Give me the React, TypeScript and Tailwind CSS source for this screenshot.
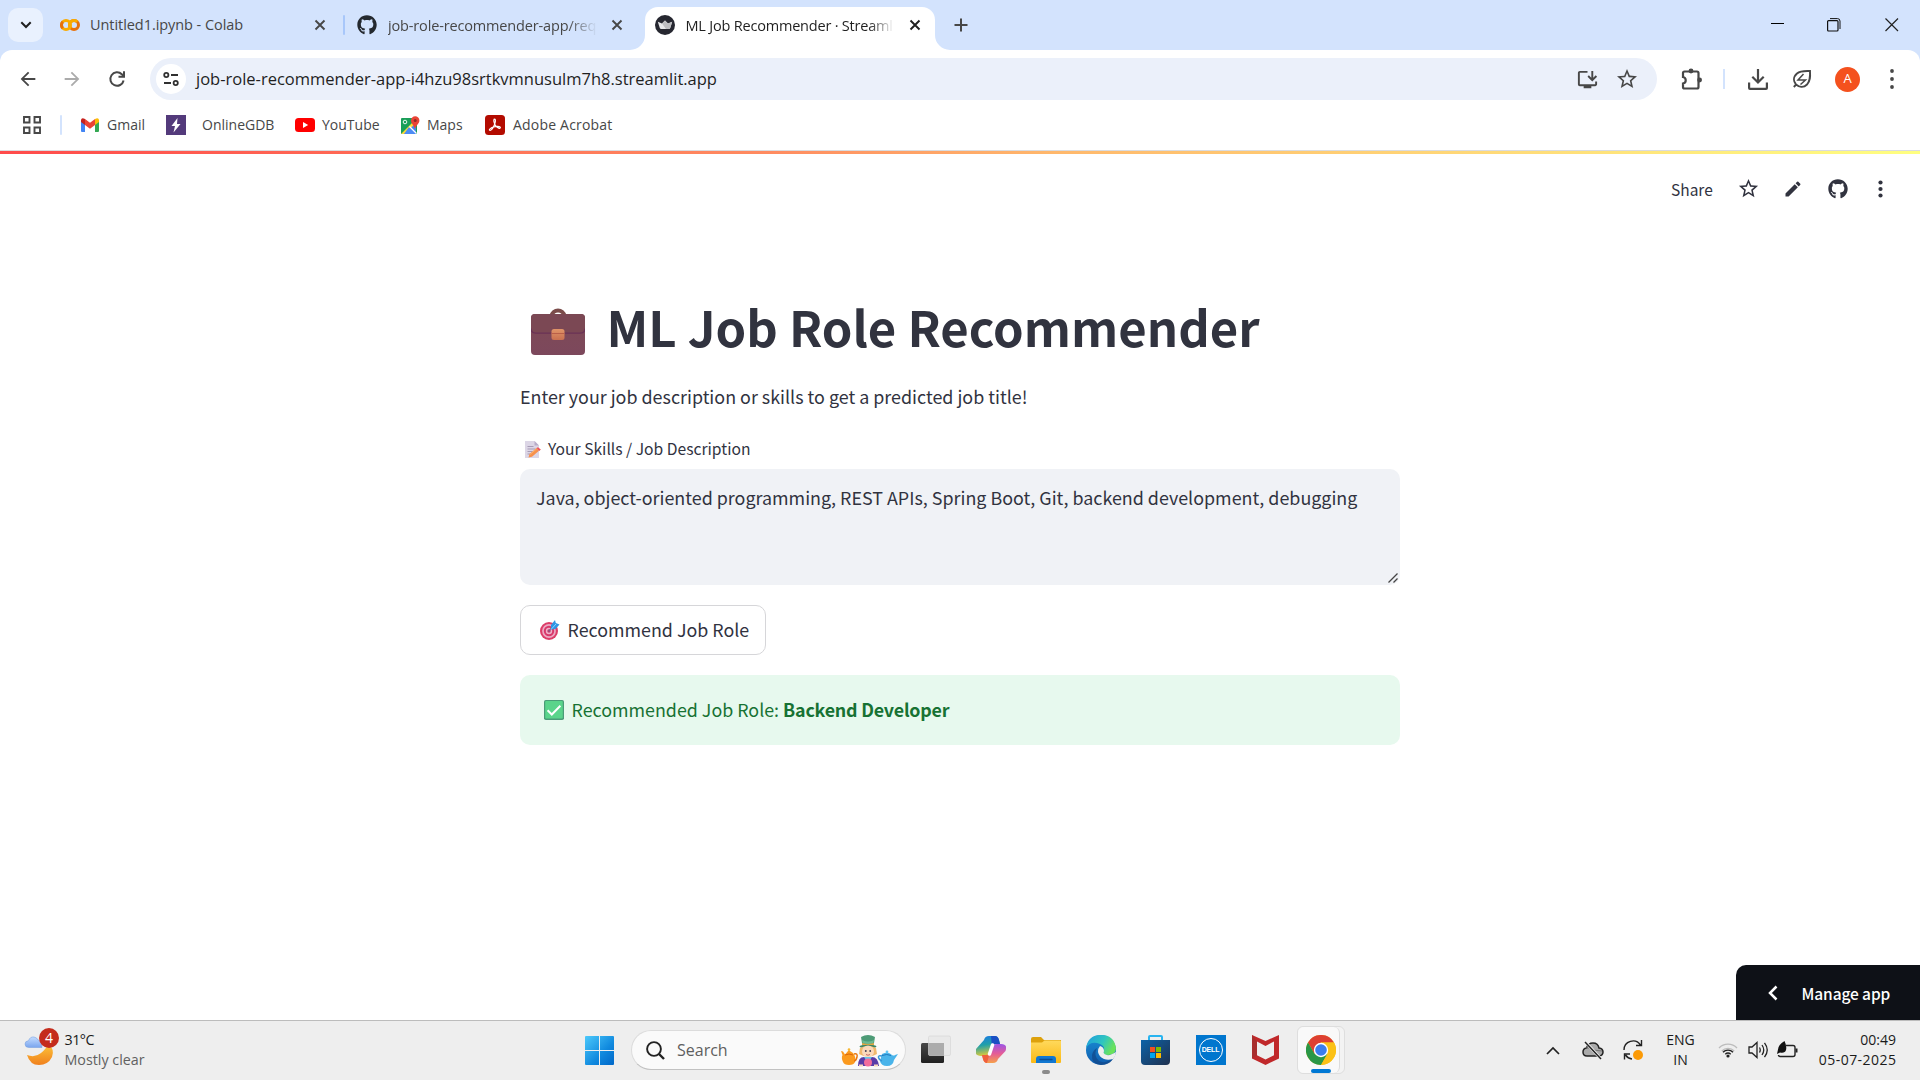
import React from "react";
import { MdArrowBack, MdArrowForward, MdStarBorder, MdEdit, MdInstallDesktop } from "react-icons/md";
import { FaGithub } from "react-icons/fa";

const ui = "whitespace-nowrap [font-family:'Open_Sans','Noto_Sans',sans-serif]";
const src = "whitespace-nowrap [font-family:'Noto_Sans_CJK_SC','Noto_Sans',sans-serif]";

function TabClose({ color }: { color: string }) {
  return (
    <svg width="12" height="12" viewBox="0 0 12 12" className="shrink-0">
      <path d="M1.5 1.5 10.5 10.5M10.5 1.5 1.5 10.5" stroke={color} strokeWidth="1.9" />
    </svg>
  );
}

function ColabIcon() {
  return (
    <svg width="20" height="12" viewBox="0 0 20 12" className="shrink-0" fill="none" strokeWidth="3">
      <circle cx="14" cy="6" r="4.5" stroke="#e8710a" />
      <path d="M10.800 9.200A4.500 4.500 0 0 1 17.200 2.800" stroke="#f9ab00" />
      <circle cx="6" cy="6" r="4.5" stroke="#f9ab00" />
      <path d="M2.800 2.800A4.500 4.500 0 0 0 2.800 9.200" stroke="#e8710a" />
    </svg>
  );
}

function CrownIcon() {
  return (
    <svg width="20" height="20" viewBox="0 0 20 20" className="shrink-0">
      <circle cx="10" cy="10" r="10" fill="#262730" />
      <path d="M2.8 6.8 7 8.6 10 5.6l3 3 4.2-1.8-2 6.2q-.3 1-1.4 1H6.2q-1.100 0-1.400-1Z" fill="#e8e8ea" />
      <path d="m10 5.600 3 3 4.200-1.800-2 6.200q-.3 1-1.400 1H11l-4-5.400Z" fill="#bdbdc0" />
    </svg>
  );
}

function TabStrip() {
  return (
    <div className="flex h-[50px] w-full shrink-0 items-center bg-[#d3e3fd]">
      <div className="ml-2 flex h-[34px] w-[35px] items-center justify-center rounded-[10px] bg-[#e9f1fe]">
        <svg width="12" height="8" viewBox="0 0 12 8"><path d="M1.300 1.300 6 6l4.700-4.700" fill="none" stroke="#1f1f1f" strokeWidth="2" /></svg>
      </div>
      <div className="ml-[17px] flex w-[283px] items-center">
        <ColabIcon />
        <span className={`${ui} ml-[10px] flex-1 text-[14.5px] tracking-[-0.06px] text-[#474747]`}>Untitled1.ipynb - Colab</span>
        <div className="mr-[17px] flex"><TabClose color="#474747" /></div>
      </div>
      <div className="h-5 w-[2px] rounded bg-[#a8c7fa]" />
      <div className="ml-[12px] flex w-[288px] items-center">
        <FaGithub size={20} color="#24292f" className="shrink-0" />
        <div className="ml-[11px] w-[209px] [mask-image:linear-gradient(90deg,#000_86%,transparent)]">
          <span className={`${ui} text-[14.5px] tracking-[-0.15px] text-[#474747]`}>job-role-recommender-app/req</span>
        </div>
        <div className="ml-[14px] flex"><TabClose color="#474747" /></div>
      </div>
      <div className="relative mt-[7px] flex h-[43px] w-[290px] items-center rounded-t-[13px] bg-white">
        <svg width="15" height="15" viewBox="0 0 15 15" className="absolute bottom-0 -left-[15px]"><path d="M15 0v15H0A15 15 0 0 0 15 0Z" fill="#fff" /></svg>
        <svg width="15" height="15" viewBox="0 0 15 15" className="absolute -right-[15px] bottom-0"><path d="M0 0v15h15A15 15 0 0 1 0 0Z" fill="#fff" /></svg>
        <div className="-mt-[7px] ml-[10px] flex items-center">
          <CrownIcon />
          <div className="ml-[10.5px] w-[208px] [mask-image:linear-gradient(90deg,#000_88%,transparent)]">
            <span className={`${ui} text-[14.5px] tracking-[-0.2px] text-[#1f1f1f]`}>ML Job Recommender · Streaml</span>
          </div>
          <div className="ml-[15.5px] flex"><TabClose color="#1f1f1f" /></div>
        </div>
      </div>
      <svg width="14" height="14" viewBox="0 0 14 14" className="ml-[19px]"><path d="M7 .5v13M.5 7h13" stroke="#474747" strokeWidth="2" /></svg>
      <div className="ml-auto flex items-center pr-[21px]">
        <svg width="14" height="14" viewBox="0 0 14 14" shapeRendering="crispEdges"><path d="M0 5.500h13" stroke="#000" /></svg>
        <svg width="14" height="14" viewBox="0 0 14 14" className="ml-[42px]" fill="none" stroke="#111">
          <rect x=".6" y="2.600" width="10.400" height="10.400" rx="1" strokeWidth="1.200" />
          <path d="M3 .6h7.500a2.500 2.500 0 0 1 2.500 2.500V11" />
        </svg>
        <svg width="14" height="14" viewBox="0 0 14 14" className="ml-[44px]"><path d="m.5.5 12.500 12.500M13 .5.5 13" stroke="#222" strokeWidth="1.200" /></svg>
      </div>
    </div>
  );
}

function TuneIcon() {
  return (
    <svg width="16" height="16" viewBox="0 0 16 16" fill="none" stroke="#303030" strokeWidth="1.800">
      <circle cx="3.300" cy="4" r="2.100" /><path d="M8 4h7M1 12h7" /><circle cx="12.700" cy="12" r="2.100" />
    </svg>
  );
}

function Toolbar() {
  return (
    <div className="shrink-0 bg-[#d3e3fd]">
      <div className="flex h-[58px] items-center rounded-t-[12px] bg-white">
        <MdArrowBack size={22} color="#474747" className="ml-[17px]" />
        <MdArrowForward size={22} color="#ababab" className="ml-[22px]" />
        <svg width="18" height="18" viewBox="0 0 18 18" className="ml-[25px]" fill="none" stroke="#474747" strokeWidth="2">
          <path d="M15.600 10.500A6.700 6.700 0 1 1 13.800 4.300L16 6.500" /><path d="M16 1.200v5.500h-5.500" />
        </svg>
        <div className="ml-[24px] flex h-[42px] w-[1507px] items-center rounded-full bg-[#ebf0fa]">
          <div className="ml-[6px] flex h-[30px] w-[30px] items-center justify-center rounded-full bg-white"><TuneIcon /></div>
          <span className={`${ui} ml-[10px] text-[16.5px] text-[#1f1f1f]`}>job-role-recommender-app-i4hzu98srtkvmnusulm7h8.streamlit.app</span>
          <MdInstallDesktop size={23} color="#474747" className="ml-auto" />
          <MdStarBorder size={24} color="#474747" className="mr-[18px] ml-[16px]" />
        </div>
        <svg width="22" height="22" viewBox="0 0 22 22" className="ml-[24px]">
          <path d="M2 5q0-1.500 1.500-1.500H16q1.500 0 1.500 1.500V19q0 1.500-1.500 1.500H3.500Q2 20.500 2 19v-3.500a3.300 3.300 0 0 0 0-6.500Z" fill="none" stroke="#474747" strokeWidth="2.200" />
          <circle cx="10" cy="3" r="2.400" fill="#474747" /><circle cx="18.600" cy="12" r="2.400" fill="#474747" />
        </svg>
        <div className="ml-[20px] h-5 w-[2px] bg-[#d3e3fd]" />
        <svg width="22" height="22" viewBox="0 0 22 22" className="ml-[22px]" fill="none" stroke="#474747" strokeWidth="2.200">
          <path d="M11 1v13M5.300 8.800 11 14.500l5.700-5.700M2.100 14.500V20q0 .9.900.9h16q.9 0 .9-.9v-5.500" />
        </svg>
        <svg width="20" height="20" viewBox="0 0 20 20" className="ml-[23px]" fill="none" stroke="#474747">
          <path d="M18 2Q8.500 1.500 5 4.500C.5 8.500 1.800 13 4 15.500 7 18 11.500 19 15 15.500 18.300 12 18.300 8 18 2ZM4.200 15.500 1.800 18" strokeWidth="1.900" />
          <path d="M11.500 5 6 11h7.500L8.500 15.500" strokeWidth="1.500" />
        </svg>
        <div className={`${ui} ml-[23px] flex h-[25px] w-[25px] items-center justify-center rounded-full bg-[#f4511e] text-[13px] text-white`}>A</div>
        <svg width="6" height="20" viewBox="0 0 6 20" className="ml-[29px]" fill="#474747"><circle cx="3" cy="2" r="1.900" /><circle cx="3" cy="10" r="1.900" /><circle cx="3" cy="18" r="1.900" /></svg>
      </div>
    </div>
  );
}

function Bookmark({ icon, label, gap, tight }: { icon: React.ReactNode; label: string; gap: string; tight: string }) {
  return (
    <div className={`flex items-center ${gap}`}>
      {icon}
      <span className={`${ui} mb-[2px] text-[14px] text-[#474747] ${tight}`}>{label}</span>
    </div>
  );
}

function Bookmarks() {
  return (
    <div className="flex h-[43px] shrink-0 items-start border-b border-[#dadce0] bg-white pt-[7px]">
      <div className="flex h-5 items-center">
        <svg width="18" height="18" viewBox="0 0 18 18" className="ml-[23px]" fill="none" stroke="#474747" strokeWidth="1.900">
          <path d="M1 1h5.500v5.500H1ZM11.500 1H17v5.500h-5.500ZM1 11.500h5.500V17H1ZM11.500 11.500H17V17h-5.500Z" />
        </svg>
        <div className="ml-[19px] h-5 w-[2px] rounded bg-[#d3e3fd]" />
        <Bookmark gap="ml-[19px] w-[85px]" tight="ml-[8px]" label="Gmail" icon={
          <svg width="18" height="14" viewBox="0 0 18 14" className="shrink-0">
            <path d="M0 2v11q0 1 1 1h3V5Z" fill="#4285f4" /><path d="M18 2v11q0 1-1 1h-3V5Z" fill="#34a853" />
            <path d="M4 1v6l5 3.800L14 7V1L9 4.800Z" fill="#ea4335" /><path d="M0 2Q.5-1 4 1v6L0 4Z" fill="#c5221f" /><path d="M18 2q-.5-3-4-1v6l4-3Z" fill="#fbbc04" />
          </svg>} />
        <Bookmark gap="w-[129px]" tight="ml-[16px]" label="OnlineGDB" icon={
          <svg width="20" height="20" viewBox="0 0 20 20" className="shrink-0"><rect width="20" height="20" fill="#533a7b" /><path d="M11.500 3 5.500 11H9l-1.500 6.500L14.500 9H11Z" fill="#fff" /></svg>} />
        <Bookmark gap="w-[106px]" tight="ml-[7px]" label="YouTube" icon={
          <svg width="20" height="14" viewBox="0 0 20 14" className="shrink-0"><rect width="20" height="14" rx="3.500" fill="#f00" /><path d="m8 4 5.200 3L8 10Z" fill="#fff" /></svg>} />
        <Bookmark gap="w-[84px]" tight="ml-[7px]" label="Maps" icon={
          <svg width="19" height="19" viewBox="0 0 19 19" className="shrink-0">
            <rect y="2" width="16" height="16" rx="1" fill="#1a9e58" /><path d="M1 18 15 4v14Z" fill="#4285f4" /><path d="m.5 17.500 15-15V6.500L3.500 18H1Z" fill="#fdd835" /><path d="m8 11 7.500 7H3Z" fill="#4c8bf5" /><path d="m8.500 10.500 7 7" stroke="#fff" strokeWidth="1.300" />
            <path d="M14 13.500C13.500 9.500 10 8 10 4.500a4.200 4.200 0 0 1 8.400 0C18.400 8 14.500 9.500 14 13.500Z" fill="#ea4335" /><circle cx="14.200" cy="4.500" r="1.500" fill="#8e2c26" /><circle cx="4" cy="6" r="1.800" fill="none" stroke="#fff" strokeWidth=".9" />
          </svg>} />
        <Bookmark gap="" tight="ml-[8px] tracking-[0.2px]" label="Adobe Acrobat" icon={
          <svg width="20" height="20" viewBox="0 0 20 20" className="shrink-0"><rect width="20" height="20" rx="3.500" fill="#b30b00" />
            <path d="M9.500 4.200c1.600 0 .8 3.500-.2 5.800-1 2.400-3 5.600-4.500 5.300-1.500-.6 1.300-2.700 4-3.400 2.300-.6 6.500-.9 6.600.7 0 1.500-3 .3-4.500-1.500C9.200 9.200 8 4.200 9.500 4.200Z" fill="none" stroke="#fff" strokeWidth="1.200" /></svg>} />
      </div>
    </div>
  );
}

function AppMenu() {
  return (
    <div className="flex h-[69px] items-center pl-[1671px]">
      <span className={`${src} w-[68px] text-[15.500px] leading-[20px] text-[#31333f]`}>Share</span>
      <MdStarBorder size={23} color="#31333f" className="-ml-[2px] shrink-0" />
      <MdEdit size={20} color="#31333f" className="ml-[23px] shrink-0" />
      <FaGithub size={20} color="#31333f" className="ml-[25px] shrink-0" />
      <svg width="5" height="18" viewBox="0 0 5 18" className="ml-[30px] shrink-0" fill="#31333f"><circle cx="2.500" cy="2.500" r="2.100" /><circle cx="2.500" cy="9" r="2.100" /><circle cx="2.500" cy="15.500" r="2.100" /></svg>
    </div>
  );
}

function Briefcase() {
  return (
    <svg width="54" height="49" viewBox="0 0 54 49" className="shrink-0">
      <defs><linearGradient id="bc" x2="0" y2="1"><stop stopColor="#7f4a56" /><stop offset="1" stopColor="#7c485c" /></linearGradient>
        <linearGradient id="bl" x2="0" y2="1"><stop stopColor="#e09468" /><stop offset="1" stopColor="#c97050" /></linearGradient></defs>
      <path d="M20.500 10a6.600 6.600 0 0 1 13 0" fill="none" stroke="#7b4c4a" strokeWidth="4" />
      <rect y="8" width="54" height="41" rx="4" fill="url(#bc)" />
      <path d="M0 23q0 4.500 5 4.500h44q5 0 5-4.500V12q0-4-4-4H4q-4 0-4 4Z" fill="#7b4854" />
      <path d="M0 22.500q0 4.700 5 4.700h44q5 0 5-4.700" fill="none" stroke="#6b3257" strokeWidth="1.300" />
      <rect x="20.500" y="23" width="13" height="11" rx="2.500" fill="url(#bl)" /><path d="M20.500 27.500h13" stroke="#b95f48" />
    </svg>
  );
}

function Memo() {
  return (
    <svg width="17" height="17" viewBox="0 0 17 17" className="shrink-0">
      <path d="M0 0h9.500L14 4.500V17H0Z" fill="#dcd6e6" /><path d="M9.500 0 14 4.500H9.500Z" fill="#b7acc8" />
      <path d="M2.500 5.500h6M2.500 8h8M2.500 10.500h5M2.500 13h3" stroke="#a79bb5" />
      <path d="m3.500 16.500 1-3.500 7-6 2.500 2.700-7 6Z" fill="#f7914d" /><path d="m11.500 7 1.500-.8 2.800 2.300-1.500 1.500Z" fill="#ef4f5b" /><path d="m5 13.500 6.500-5.500" stroke="#ffb066" />
    </svg>
  );
}

function Dart() {
  return (
    <svg width="20" height="20" viewBox="0 0 20 20" className="shrink-0">
      <circle cx="9" cy="11" r="9" fill="#dc3d68" /><circle cx="9" cy="11" r="6.900" fill="#eba9c3" /><circle cx="9" cy="11" r="5.200" fill="#d8386a" /><circle cx="9" cy="11" r="3.200" fill="#efb0c8" /><circle cx="9" cy="11" r="1.700" fill="#c93468" />
      <path d="m8.500 11.500 4.500-5" stroke="#7f5f86" strokeWidth="1.300" />
      <path d="M11 9.500V5l4-5 .8 3L19.500 4.500 15.500 9Z" fill="#2f95e4" /><path d="m11 9.500 5-5.500" stroke="#8ad0ff" />
    </svg>
  );
}

function Check() {
  return (
    <svg width="20" height="20" viewBox="0 0 20 20" className="shrink-0">
      <rect width="20" height="20" rx="1.800" fill="#4a9c78" /><rect x="1.200" y="1" width="17.600" height="17.500" rx="1" fill="#5ad48b" />
      <path d="m3.600 10.300 4.200 4.200 8.600-8.800" fill="none" stroke="#fff" strokeWidth="2" />
    </svg>
  );
}

function StreamlitApp() {
  return (
    <div className="flex h-[869px] shrink-0 flex-col bg-white">
      <div className="h-[3px] shrink-0 bg-[linear-gradient(90deg,#ff4b4b,#ff8b60_40%,#ffb86c_55%,#ffe07a_82%,#ffff80)]" />
      <AppMenu />
      <div className="mx-auto flex w-[880px] flex-col text-[#31333f]">
        <div className="mt-[74px] flex h-[66px] items-center pl-[11px]">
          <Briefcase />
          <h1 className={`${src} mb-[8px] ml-[21.500px] text-[49px] leading-[66px] font-bold`}>ML Job Role Recommender</h1>
        </div>
        <p className={`${src} mt-[18px] w-fit text-[17.900px] leading-[30px]`}>Enter your job description or skills to get a predicted job title!</p>
        <div className="mt-[26px] flex h-[24px] items-center pl-[5px]">
          <Memo />
          <span className={`${src} ml-[6px] text-[15.650px] leading-[24px]`}>Your Skills / Job Description</span>
        </div>
        <div className="relative mt-[8px] h-[116px] rounded-[10px] bg-[#f0f2f6] px-4 pt-[13px]">
          <span className={`${src} text-[17.900px] leading-[30px]`}>Java, object-oriented programming, REST APIs, Spring Boot, Git, backend development, debugging</span>
          <svg width="10" height="10" viewBox="0 0 10 10" className="absolute right-[2px] bottom-[2px]"><path d="M.5 9.500 9.500.5M5.500 9.500l4-4" stroke="#444" strokeWidth="1.300" /></svg>
        </div>
        <button className="mt-[20px] flex h-[50px] w-[246px] items-center rounded-[10px] border border-[#d6d6d9] pl-[19px]">
          <Dart />
          <span className={`${src} mb-[3px] ml-[7.500px] text-[17.850px] leading-[30px]`}>Recommend Job Role</span>
        </button>
        <div className="mt-[20px] flex h-[70px] items-center rounded-[10px] bg-[#e7f9ee] pl-[24px] text-[#177233]">
          <Check />
          <span className={`${src} mb-[3px] ml-[7.500px] text-[17.850px] leading-[30px]`}>Recommended Job Role:</span>
          <span className={`${src} mb-[3px] ml-[4px] text-[17.850px] leading-[30px] font-semibold tracking-[-0.200px]`}>Backend Developer</span>
        </div>
      </div>
      <div className="mt-auto ml-auto flex h-[55px] w-[184px] items-center rounded-tl-[10px] bg-[#0e1117] text-white">
        <svg width="10" height="16" viewBox="0 0 10 16" className="ml-[32px]"><path d="M8.500 1.500 2 8l6.500 6.500" fill="none" stroke="#fff" strokeWidth="2.500" /></svg>
        <span className={`${src} ml-[23.500px] text-[15.500px] leading-[24px] font-medium tracking-[-0.100px]`}>Manage app</span>
      </div>
    </div>
  );
}

function Cell({ children, mark }: { children: React.ReactNode; mark?: string }) {
  return (
    <div className="relative flex h-[48px] w-[55px] shrink-0 items-center justify-center">
      {children}
      {mark && <div className={`absolute bottom-0 h-1 rounded-full ${mark}`} />}
    </div>
  );
}

function Hatter() {
  return (
    <svg width="58" height="33" viewBox="0 0 58 33" className="shrink-0">
      <path d="M7 17q1-2 2 0l3 2q3 3 2 9-1 3-6 3t-6-3q-2-4-.5-7L0 17l2 .5 2 3Z" fill="#fb9a1e" /><path d="M13 20q4-1 3 3t-3 4" fill="none" stroke="#e9760f" strokeWidth="1.500" />
      <circle cx="8" cy="15.500" r="1.300" fill="#f7b733" /><path d="M4 21q4-2 8 0" stroke="#d9640b" fill="none" />
      <path d="M20 3q7-4 14 0l-1.500 9h-11Z" fill="#4d9b76" /><path d="M21 6q6 3 12 0l-.7 3q-5 2-10.600 0Z" fill="#6eb992" /><path d="M21 9q6 2 12 0l-.3 2.500H21.300Z" fill="#eba73d" /><ellipse cx="27" cy="12.500" rx="8.500" ry="1.800" fill="#3d8566" />
      <path d="M19 14q8-4 16 0l1 6q-9 5-18 0Z" fill="#f1b96d" /><circle cx="27" cy="17.500" r="6" fill="#fbd9bb" /><circle cx="24.800" cy="17" r=".9" fill="#3c3a50" /><circle cx="29.200" cy="17" r=".9" fill="#3c3a50" /><path d="M25 20.500q2 1.500 4 0" stroke="#c66" fill="none" />
      <path d="M17 32q0-9 6-9h8q6 0 7 9Z" fill="#5a3ca8" /><path d="M23 23h8l-4 6Z" fill="#66c6ea" /><circle cx="27" cy="28.500" r="4" fill="#f26d9c" /><path d="M18 31.500h4M33 31.500h4" stroke="#fbd9bb" strokeWidth="2" />
      <path d="M41 20q6-3 10 1 2 1 3 0l3-1-4 6q-1 6-7 6-6 0-7-5Z" fill="#4ab4ea" /><circle cx="46" cy="18" r="1.400" fill="#62c4f2" /><path d="M41 22q-4-1-3.500 1.500T41 27" fill="none" stroke="#3797d8" strokeWidth="1.500" /><path d="M41 21.500q5-2 9 0" stroke="#1f78bd" fill="none" />
    </svg>
  );
}

function Taskbar() {
  return (
    <div className="flex h-[60px] shrink-0 items-center border-t border-[#bcbcbc] bg-[#eeeeee] pb-[1px]">
      <div className="flex w-[585px] items-center">
        <svg width="36" height="34" viewBox="0 0 36 34" className="-mt-[4px] ml-[24px] shrink-0">
          <defs><linearGradient id="mn" x2="0" y2="1"><stop stopColor="#fdc53a" /><stop offset="1" stopColor="#f0801d" /></linearGradient><linearGradient id="cl" x2="0" y2="1"><stop stopColor="#c3dcff" /><stop offset="1" stopColor="#7aa5ee" /></linearGradient></defs>
          <path d="M3 24q8 3 14-2t7-9q7 5 4 13-4 8-13 8Q6 34 3 24Z" fill="url(#mn)" />
          <path d="M5 16.500q-4 0-4-3.500 0-3 3.500-3.300Q6 5.500 10 6q3 .5 4 3 4 0 4 7.500Z" fill="url(#cl)" stroke="#7ba2e0" strokeWidth=".6" />
        </svg>
        <div className={`${ui} z-10 -mt-[25px] -ml-[21px] flex h-5 w-5 shrink-0 items-center justify-center rounded-full bg-[#c42b1c] text-[14px] text-white`}>4</div>
        <div className={`${ui} mb-[1px] ml-[5.500px] flex flex-col text-[14.300px] leading-[20px]`}>
          <span className="w-fit tracking-[-0.500px] text-[#1b1b1b]">31°C</span>
          <span className="w-fit text-[#616161]">Mostly clear</span>
        </div>
      </div>
      <svg width="29" height="29" viewBox="0 0 29 29" className="shrink-0">
        <defs><linearGradient id="win" x2="1" y2="1"><stop stopColor="#4cc9fb" /><stop offset=".6" stopColor="#1089de" /><stop offset="1" stopColor="#0067c8" /></linearGradient></defs>
        <path d="M1 0h13v14H0V1Q0 0 1 0ZM15 0h13q1 0 1 1v13H15ZM0 15h14v14H1q-1 0-1-1ZM15 15h14v13q0 1-1 1H15Z" fill="url(#win)" />
      </svg>
      <div className="ml-[17px] flex h-[40px] w-[275px] shrink-0 items-center rounded-full border border-[#dcdcdc] border-b-[#c2c2c2] bg-[#fafafa]">
        <svg width="19" height="19" viewBox="0 0 19 19" className="ml-[14px]"><circle cx="8" cy="8" r="6.900" fill="none" stroke="#222" strokeWidth="1.900" /><path d="m13 13 5 5" stroke="#222" strokeWidth="2.400" /></svg>
        <span className={`${ui} ml-[12px] text-[16px] text-[#5f5f5f]`}>Search</span>
        <div className="mr-[6px] ml-auto"><Hatter /></div>
      </div>
      <div className="ml-[2px] flex">
        <Cell><svg width="30" height="30" viewBox="0 0 30 30"><defs><linearGradient id="tv" x2="0" y2="1"><stop stopColor="#484848" /><stop offset="1" stopColor="#202020" /></linearGradient></defs>
          <rect y="8" width="23" height="20" rx="1.500" fill="url(#tv)" /><rect x="7.500" y="1" width="22" height="19.500" rx="1.500" fill="#e9e9e9" stroke="#d4d4d4" strokeWidth=".6" /><path d="M7.500 8H23v12.500H9q-1.500 0-1.500-1.500Z" fill="#acacac" /></svg></Cell>
        <Cell><svg width="30" height="28" viewBox="0 0 30 28"><defs>
          <linearGradient id="c1" x2="0.200" y2="1"><stop stopColor="#1b78e8" /><stop offset=".5" stopColor="#20a0a8" /><stop offset="1" stopColor="#d9c93c" /></linearGradient>
          <linearGradient id="c2" x2="0" y2="1"><stop stopColor="#9b55e6" /><stop offset=".5" stopColor="#e45c98" /><stop offset="1" stopColor="#f6a04a" /></linearGradient></defs>
          <path d="M8 4q1-4 5-4h6q3 0 4 4l1 4h-4q-3 0-4 3l-2 6q-1 3-5 3H5q-7 0-5-7Z" fill="url(#c1)" /><path d="M15 0h4q3 0 4 4l1 4h-4q-3 0-4 3Z" fill="#1a4fc4" />
          <path d="M22 23q-1 4-5 4h-6q-3 0-4-4l-1-4h4q3 0 4-3l2-5q1-3 5-3h4q7 0 4.500 7Z" fill="url(#c2)" /><path d="M6 19h4q3 0 4-3l-3 11q-3 0-4-4Z" fill="#f0603c" />
          <path d="m16.500 9-3 9" stroke="#fff" strokeWidth="3.500" strokeLinecap="round" /></svg></Cell>
        <Cell mark="w-2 bg-[#8a8a8a]"><svg width="30" height="27" viewBox="0 0 30 27"><defs><linearGradient id="fd" x2="0" y2="1"><stop stopColor="#ffd95c" /><stop offset="1" stopColor="#fbb914" /></linearGradient></defs>
          <path d="M0 2q0-2 2-2h8l3 3h17v5H0Z" fill="#dda10c" /><path d="M0 5.500h11L13.500 3.500H29q1 0 1 1V25q0 1-1 1H1q-1 0-1-1Z" fill="url(#fd)" /><path d="M5 26v-4q0-3 3-3h14q3 0 3 3v4Z" fill="#1177d1" /><path d="M9 22.500h12" stroke="#0c4e94" strokeWidth="1.300" strokeLinecap="round" /></svg></Cell>
        <Cell><svg width="30" height="30" viewBox="0 0 30 30"><defs><linearGradient id="e1" x2="1" y2=".4"><stop stopColor="#1e9be0" /><stop offset=".6" stopColor="#2fc5c0" /><stop offset="1" stopColor="#6ae25c" /></linearGradient><linearGradient id="e2" x2="0" y2="1"><stop stopColor="#1a8fd6" /><stop offset="1" stopColor="#0f5cae" /></linearGradient></defs>
          <circle cx="15" cy="15" r="15" fill="url(#e2)" /><path d="M0 13Q2 0 15 0t15 13q0 7-8 7-6 0-4-4 1-5-4-7Q5 5 0 13Z" fill="url(#e1)" />
          <path d="M11 13q-4 8 2 13 5 3 14-2-4 6-12 6Q5 29 6 20q1-5 5-7Z" fill="#114a8b" opacity=".75" /><path d="M14 11q4 1 4 5-1 2 .5 3 4 3 11.500-2 0 4-3 7-5 1.500-9 0-5-2-6-7 0-4 2-6Z" fill="#eeeeee" /></svg></Cell>
        <Cell><svg width="29" height="30" viewBox="0 0 29 30"><defs><linearGradient id="st" x2="1" y2="1"><stop stopColor="#0c63a8" /><stop offset="1" stopColor="#20314f" /></linearGradient></defs>
          <path d="M8 6V2q0-1 1-1h11q1 0 1 1v4" fill="none" stroke="#28b4f0" strokeWidth="2" /><path d="M0 5h29v21q0 4-4 4H4q-4 0-4-4Z" fill="url(#st)" />
          <path d="M9 12h5v5H9Z" fill="#f25022" /><path d="M15 12h5v5h-5Z" fill="#7fba00" /><path d="M9 18h5v5H9Z" fill="#00a4ef" /><path d="M15 18h5v5h-5Z" fill="#ffb900" /></svg></Cell>
        <Cell><div className="flex h-[30px] w-[30px] items-center justify-center bg-[#0076ce]">
          <div className="flex h-6 w-6 items-center justify-center rounded-full border-[1.500px] border-white"><span className="text-[7px] font-bold tracking-[-0.200px] text-white [font-family:'Liberation_Sans',sans-serif]">DELL</span></div></div></Cell>
        <Cell><svg width="27" height="30" viewBox="0 0 27 30"><path d="M0 0 13.500 6 27 0v23.500L13.500 30 0 23.500Z" fill="#c0282a" /><path d="M5 6.500 13.500 11 22 6.500v13.700l-8.500 4.300L5 20.200Z" fill="#eeeeee" /><path d="M0 0 5 6.500v13.700l-5 3.300Z" fill="#a82d2d" /></svg></Cell>
        <div className="ml-[4px] flex h-[48px] w-[48px] shrink-0 rounded-md border border-[#dedede] bg-[#f3f3f3]">
          <div className="relative flex h-[46px] w-[42px] items-center justify-center rounded-md border-r border-[#dcdcdc] bg-[#f9f9f9] pl-[4px]">
            <svg width="30" height="30" viewBox="0 0 30 30"><circle cx="15" cy="15" r="15" fill="#fbc116" /><path d="M15 7.500h13a15 15 0 0 0-26 0L8.500 18.700Z" fill="#dd3f32" /><path d="M2 7.500a15 15 0 0 0 13 22.500l6.500-11.300H8.500Z" fill="#2a9747" /><path d="M21.500 18.700 15 30A15 15 0 0 0 28 7.500H15Z" fill="#fbc116" /><circle cx="15" cy="15" r="7.200" fill="#fff" /><circle cx="15" cy="15" r="5.800" fill="#3b7ded" /></svg>
            <div className="absolute bottom-0 left-[13px] h-1 w-5 rounded-full bg-[#0078d4]" />
          </div>
        </div>
      </div>
      <div className="mr-[24px] ml-auto flex items-center text-[#1b1b1b]">
        <svg width="14" height="9" viewBox="0 0 14 9"><path d="m1 8 6-6 6 6" fill="none" stroke="#222" strokeWidth="1.700" /></svg>
        <svg width="22" height="20" viewBox="0 0 22 20" className="ml-[22px]"><path d="M5 16q-4 0-4-4 0-3.500 3.500-4Q6 3 11 3t6 5q4 .5 4 4t-4 4Z" fill="#aaa" stroke="#222" strokeWidth="1.500" /><path d="M4 8q4-1 7 2l9 1" stroke="#777" fill="none" /><path d="m3.500 2 15.500 17" stroke="#eee" strokeWidth="3" /><path d="m3 2 16 17" stroke="#222" strokeWidth="1.500" /></svg>
        <svg width="22" height="22" viewBox="0 0 22 22" className="ml-[18px]" fill="none" stroke="#222" strokeWidth="1.400"><path d="M2 11a9 9 0 0 1 16.500-5M19.500 1v5.500H14M10 20a9 9 0 0 1-6.500-4M2.500 20.500V15H8" /><circle cx="16" cy="16" r="5" fill="#fb9a06" stroke="none" /></svg>
        <div className={`${ui} mb-[1px] ml-[22px] w-[29px] text-center text-[14px] leading-[20px]`}><div>ENG</div><div>IN</div></div>
        <svg width="20" height="16" viewBox="0 0 20 16" className="ml-[23px]" fill="none" strokeWidth="1.400"><path d="M1 6a12.500 12.500 0 0 1 18 0M3.800 9a8.700 8.700 0 0 1 12.400 0" stroke="#bcbcbc" /><path d="M5 10.200a7 7 0 0 1 10 0M7.300 12.300a4 4 0 0 1 5.400 0" stroke="#222" /><circle cx="10" cy="14" r="1.600" fill="#222" /></svg>
        <svg width="21" height="18" viewBox="0 0 21 18" className="ml-[9.500px]" fill="none" stroke="#222" strokeWidth="1.300"><path d="M1 6h3l5-4.500v15L4 12H1Z" /><path d="M11.500 6.500q1.500 2.500 0 5M14 4q3.500 5 0 10M16.500 1.800q5.500 7.200 0 14.400" /></svg>
        <svg width="22" height="18" viewBox="0 0 22 18" className="ml-[8.500px]"><path d="M9 4.500h7q2 0 2 2v7q0 2-2 2H3q-1.500 0-1.500-1.500" fill="none" stroke="#222" strokeWidth="1.400" /><path d="M18.500 7.500h2v4h-2Z" fill="#222" /><path d="M7.500 0Q1 4 1 8.500L0 13l3-1.500q5 1 6-2.500Q10 5 7.500 0Z" fill="#111" /></svg>
        <div className={`${ui} mb-[1px] ml-[17px] flex w-[80px] flex-col items-end text-[14px] leading-[20px]`}><div>00:49</div><div className="-mr-[0.400px] tracking-[0.450px]">05-07-2025</div></div>
      </div>
    </div>
  );
}

export default function App() {
  return (
    <div className="flex h-[1080px] w-[1920px] flex-col overflow-hidden bg-white">
      <TabStrip />
      <Toolbar />
      <Bookmarks />
      <StreamlitApp />
      <Taskbar />
    </div>
  );
}
